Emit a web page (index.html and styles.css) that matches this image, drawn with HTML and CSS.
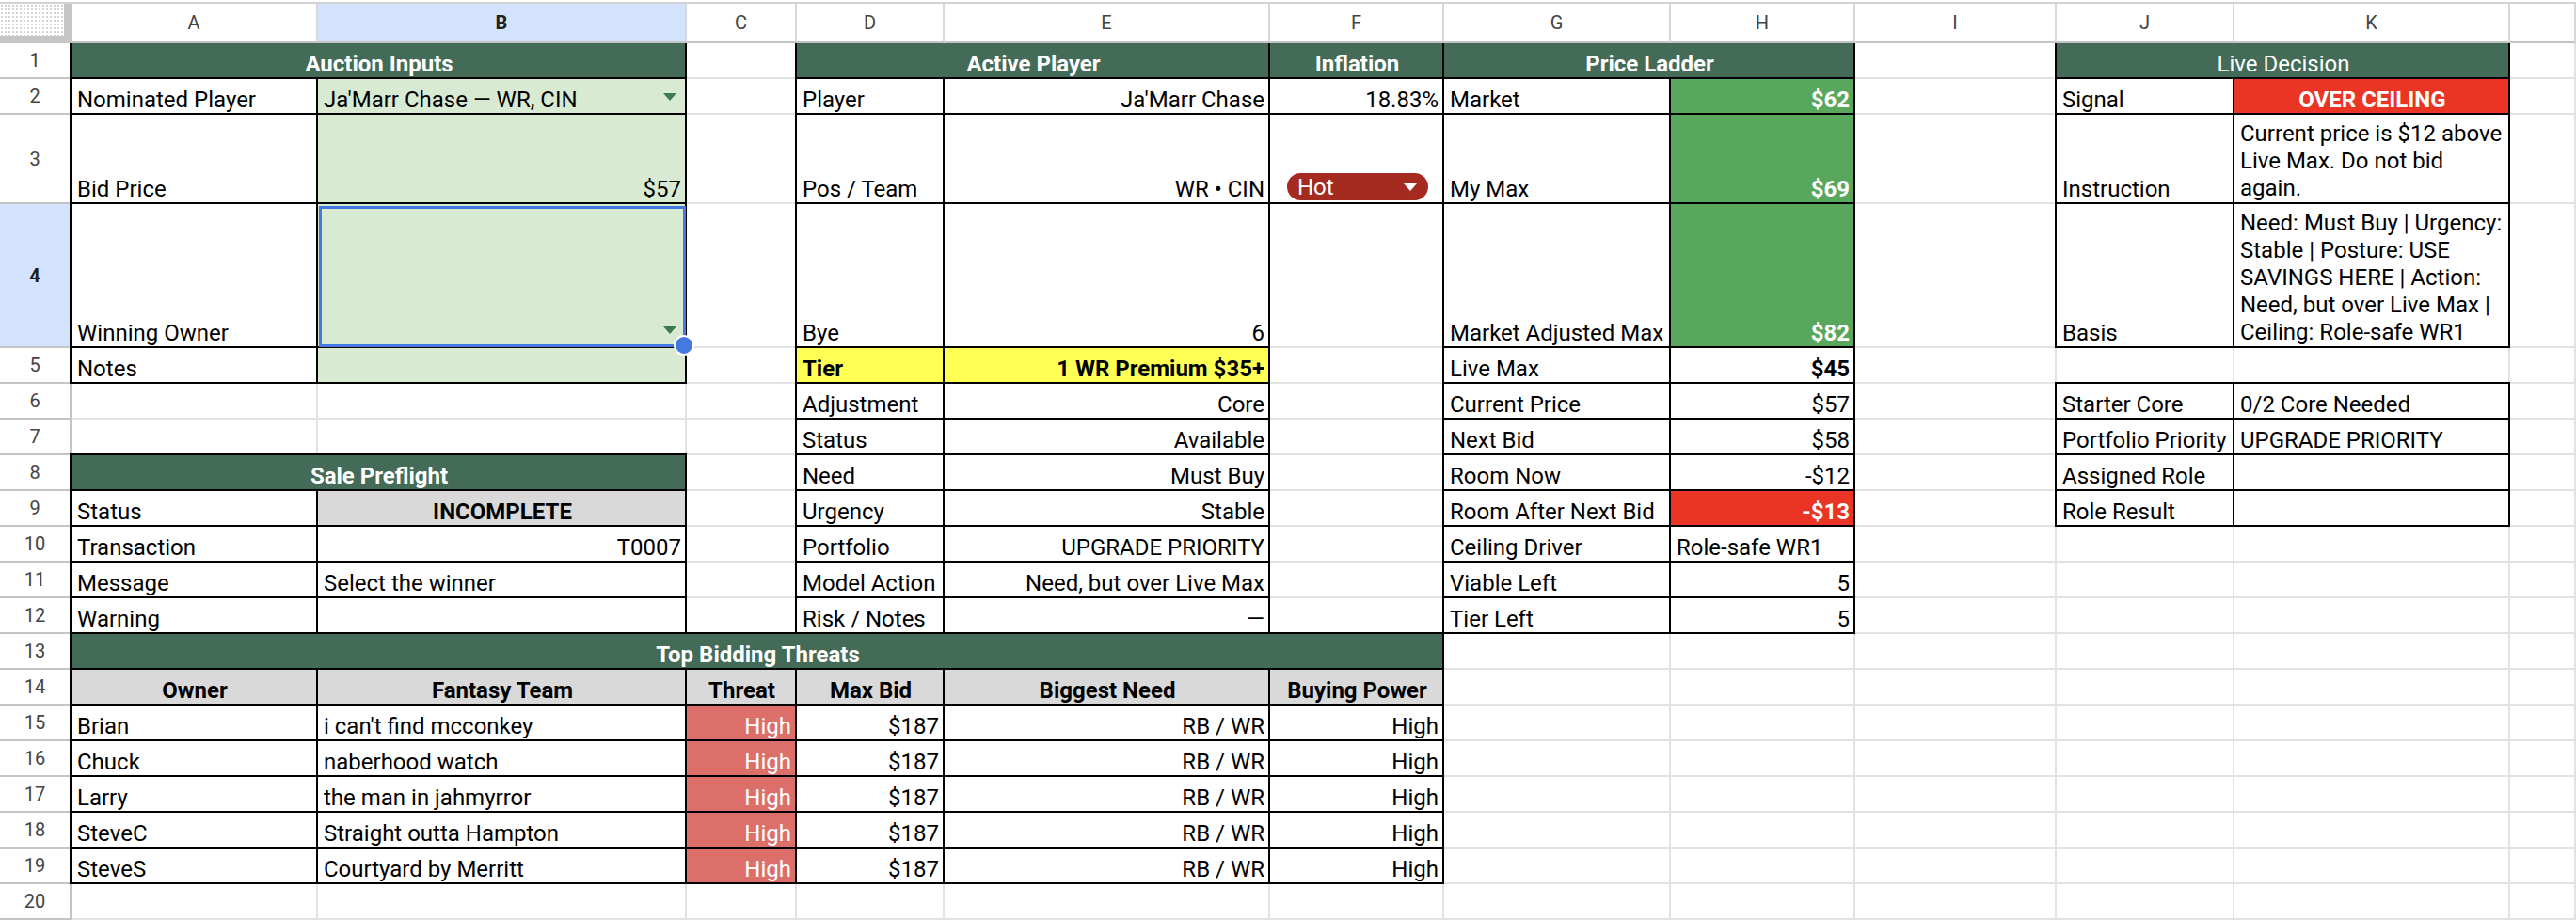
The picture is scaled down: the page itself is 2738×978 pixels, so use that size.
FILE: index.html
```html
<!DOCTYPE html>
<html>
<head>
<meta charset="utf-8">
<title>Auction Board</title>
<link rel="stylesheet" href="styles.css">
</head>
<body>
<div class="sheet">
  <!-- column headers -->
  <div class="corner"></div>
  <div class="ch">A</div><div class="ch hl">B</div><div class="ch">C</div><div class="ch">D</div><div class="ch">E</div><div class="ch">F</div><div class="ch">G</div><div class="ch">H</div><div class="ch">I</div><div class="ch">J</div><div class="ch">K</div><div class="ch"></div>

  <!-- row 1 -->
  <div class="rh">1</div>
  <div class="c b nt g span2">Auction Inputs</div>
  <div class="c"></div>
  <div class="c b nt g span2">Active Player</div>
  <div class="c b nt g">Inflation</div>
  <div class="c b nt g span2">Price Ladder</div>
  <div class="c"></div>
  <div class="c b nt g n span2">Live Decision</div>
  <div class="c"></div>

  <!-- row 2 -->
  <div class="rh">2</div>
  <div class="c b">Nominated Player</div>
  <div class="c b inp">Ja'Marr Chase — WR, CIN<span class="dd"></span></div>
  <div class="c"></div>
  <div class="c b">Player</div>
  <div class="c b r">Ja'Marr Chase</div>
  <div class="c b r">18.83%</div>
  <div class="c b">Market</div>
  <div class="c b r gr">$62</div>
  <div class="c"></div>
  <div class="c b">Signal</div>
  <div class="c b ctr red">OVER CEILING</div>
  <div class="c"></div>

  <!-- row 3 -->
  <div class="rh">3</div>
  <div class="c b">Bid Price</div>
  <div class="c b inp r">$57</div>
  <div class="c"></div>
  <div class="c b">Pos / Team</div>
  <div class="c b r">WR • CIN</div>
  <div class="c b"><span class="chip"><span class="t">Hot</span><span class="a"></span></span></div>
  <div class="c b">My Max</div>
  <div class="c b r gr">$69</div>
  <div class="c"></div>
  <div class="c b">Instruction</div>
  <div class="c b"><span class="wr">Current price is $12 above<br>Live Max. Do not bid<br>again.</span></div>
  <div class="c"></div>

  <!-- row 4 -->
  <div class="rh hl">4</div>
  <div class="c b">Winning Owner</div>
  <div class="c b inp sel"><span class="dd"></span></div>
  <div class="c"></div>
  <div class="c b">Bye</div>
  <div class="c b r">6</div>
  <div class="c"></div>
  <div class="c b">Market Adjusted Max</div>
  <div class="c b r gr">$82</div>
  <div class="c"></div>
  <div class="c b">Basis</div>
  <div class="c b"><span class="wr">Need: Must Buy | Urgency:<br>Stable | Posture: USE<br>SAVINGS HERE | Action:<br>Need, but over Live Max |<br>Ceiling: Role-safe WR1</span></div>
  <div class="c"></div>

  <!-- row 5 -->
  <div class="rh">5</div>
  <div class="c b">Notes</div>
  <div class="c b inp"></div>
  <div class="c"></div>
  <div class="c b yl">Tier</div>
  <div class="c b yl r">1 WR Premium $35+</div>
  <div class="c"></div>
  <div class="c b">Live Max</div>
  <div class="c b r bold">$45</div>
  <div class="c"></div>
  <div class="c"></div>
  <div class="c"></div>
  <div class="c"></div>

  <!-- row 6 -->
  <div class="rh">6</div>
  <div class="c"></div>
  <div class="c"></div>
  <div class="c"></div>
  <div class="c b">Adjustment</div>
  <div class="c b r">Core</div>
  <div class="c"></div>
  <div class="c b">Current Price</div>
  <div class="c b r">$57</div>
  <div class="c"></div>
  <div class="c b">Starter Core</div>
  <div class="c b">0/2 Core Needed</div>
  <div class="c"></div>

  <!-- row 7 -->
  <div class="rh">7</div>
  <div class="c"></div>
  <div class="c"></div>
  <div class="c"></div>
  <div class="c b">Status</div>
  <div class="c b r">Available</div>
  <div class="c"></div>
  <div class="c b">Next Bid</div>
  <div class="c b r">$58</div>
  <div class="c"></div>
  <div class="c b">Portfolio Priority</div>
  <div class="c b">UPGRADE PRIORITY</div>
  <div class="c"></div>

  <!-- row 8 -->
  <div class="rh">8</div>
  <div class="c b g span2">Sale Preflight</div>
  <div class="c"></div>
  <div class="c b">Need</div>
  <div class="c b r">Must Buy</div>
  <div class="c"></div>
  <div class="c b">Room Now</div>
  <div class="c b r">-$12</div>
  <div class="c"></div>
  <div class="c b">Assigned Role</div>
  <div class="c b"></div>
  <div class="c"></div>

  <!-- row 9 -->
  <div class="rh">9</div>
  <div class="c b">Status</div>
  <div class="c b gy ctr bold">INCOMPLETE</div>
  <div class="c"></div>
  <div class="c b">Urgency</div>
  <div class="c b r">Stable</div>
  <div class="c"></div>
  <div class="c b">Room After Next Bid</div>
  <div class="c b r red">-$13</div>
  <div class="c"></div>
  <div class="c b">Role Result</div>
  <div class="c b"></div>
  <div class="c"></div>

  <!-- row 10 -->
  <div class="rh">10</div>
  <div class="c b">Transaction</div>
  <div class="c b r">T0007</div>
  <div class="c"></div>
  <div class="c b">Portfolio</div>
  <div class="c b r">UPGRADE PRIORITY</div>
  <div class="c"></div>
  <div class="c b">Ceiling Driver</div>
  <div class="c b">Role-safe WR1</div>
  <div class="c"></div>
  <div class="c"></div>
  <div class="c"></div>
  <div class="c"></div>

  <!-- row 11 -->
  <div class="rh">11</div>
  <div class="c b">Message</div>
  <div class="c b">Select the winner</div>
  <div class="c"></div>
  <div class="c b">Model Action</div>
  <div class="c b r">Need, but over Live Max</div>
  <div class="c"></div>
  <div class="c b">Viable Left</div>
  <div class="c b r">5</div>
  <div class="c"></div>
  <div class="c"></div>
  <div class="c"></div>
  <div class="c"></div>

  <!-- row 12 -->
  <div class="rh">12</div>
  <div class="c b">Warning</div>
  <div class="c b"></div>
  <div class="c"></div>
  <div class="c b">Risk / Notes</div>
  <div class="c b r">—</div>
  <div class="c"></div>
  <div class="c b">Tier Left</div>
  <div class="c b r">5</div>
  <div class="c"></div>
  <div class="c"></div>
  <div class="c"></div>
  <div class="c"></div>

  <!-- row 13 -->
  <div class="rh">13</div>
  <div class="c b g span6">Top Bidding Threats</div>
  <div class="c"></div>
  <div class="c"></div>
  <div class="c"></div>
  <div class="c"></div>
  <div class="c"></div>
  <div class="c"></div>

  <!-- row 14 -->
  <div class="rh">14</div>
  <div class="c b gy ctr bold">Owner</div>
  <div class="c b gy ctr bold">Fantasy Team</div>
  <div class="c b gy ctr bold">Threat</div>
  <div class="c b gy ctr bold">Max Bid</div>
  <div class="c b gy ctr bold">Biggest Need</div>
  <div class="c b gy ctr bold">Buying Power</div>
  <div class="c"></div>
  <div class="c"></div>
  <div class="c"></div>
  <div class="c"></div>
  <div class="c"></div>
  <div class="c"></div>

  <!-- row 15 -->
  <div class="rh">15</div>
  <div class="c b">Brian</div>
  <div class="c b">i can't find mcconkey</div>
  <div class="c b r hi">High</div>
  <div class="c b r">$187</div>
  <div class="c b r">RB / WR</div>
  <div class="c b r">High</div>
  <div class="c"></div>
  <div class="c"></div>
  <div class="c"></div>
  <div class="c"></div>
  <div class="c"></div>
  <div class="c"></div>

  <!-- row 16 -->
  <div class="rh">16</div>
  <div class="c b">Chuck</div>
  <div class="c b">naberhood watch</div>
  <div class="c b r hi">High</div>
  <div class="c b r">$187</div>
  <div class="c b r">RB / WR</div>
  <div class="c b r">High</div>
  <div class="c"></div>
  <div class="c"></div>
  <div class="c"></div>
  <div class="c"></div>
  <div class="c"></div>
  <div class="c"></div>

  <!-- row 17 -->
  <div class="rh">17</div>
  <div class="c b">Larry</div>
  <div class="c b">the man in jahmyrror</div>
  <div class="c b r hi">High</div>
  <div class="c b r">$187</div>
  <div class="c b r">RB / WR</div>
  <div class="c b r">High</div>
  <div class="c"></div>
  <div class="c"></div>
  <div class="c"></div>
  <div class="c"></div>
  <div class="c"></div>
  <div class="c"></div>

  <!-- row 18 -->
  <div class="rh">18</div>
  <div class="c b">SteveC</div>
  <div class="c b">Straight outta Hampton</div>
  <div class="c b r hi">High</div>
  <div class="c b r">$187</div>
  <div class="c b r">RB / WR</div>
  <div class="c b r">High</div>
  <div class="c"></div>
  <div class="c"></div>
  <div class="c"></div>
  <div class="c"></div>
  <div class="c"></div>
  <div class="c"></div>

  <!-- row 19 -->
  <div class="rh">19</div>
  <div class="c b">SteveS</div>
  <div class="c b">Courtyard by Merritt</div>
  <div class="c b r hi">High</div>
  <div class="c b r">$187</div>
  <div class="c b r">RB / WR</div>
  <div class="c b r">High</div>
  <div class="c"></div>
  <div class="c"></div>
  <div class="c"></div>
  <div class="c"></div>
  <div class="c"></div>
  <div class="c"></div>

  <!-- row 20 -->
  <div class="rh">20</div>
  <div class="c"></div>
  <div class="c"></div>
  <div class="c"></div>
  <div class="c"></div>
  <div class="c"></div>
  <div class="c"></div>
  <div class="c"></div>
  <div class="c"></div>
  <div class="c"></div>
  <div class="c"></div>
  <div class="c"></div>
  <div class="c"></div>
</div>
</body>
</html>
```
FILE: styles.css
```css
* { box-sizing: border-box; }
html, body { margin: 0; padding: 0; background: #fff; }
body {
  font-family: Roboto, "Liberation Sans", Arial, sans-serif;
  font-size: 24px;
  color: #000;
  overflow: hidden;
}
.sheet {
  margin-top: 2px;
  border-top: 2px solid #d3d3d3;
  display: grid;
  grid-template-columns: 76px 262px 392px 117px 157px 346px 185px 241px 196px 214px 189px 293px 1fr;
  grid-template-rows: 42px 38px 38px 95px 153px repeat(16, 38px);
}
.corner {
  background: radial-gradient(circle, #d4d4d4 0.8px, transparent 1.3px) 0 0 / 4px 4px, #fff;
  border-right: 8px solid #c6c6c6;
  border-bottom: 8px solid #c6c6c6;
}
.ch {
  display: flex;
  align-items: center;
  justify-content: center;
  font-size: 20px;
  color: #444;
  border-right: 2px solid #d8d8d8;
  border-bottom: 2px solid #c4c4c4;
}
.rh {
  display: flex;
  align-items: center;
  justify-content: center;
  font-size: 20px;
  color: #444;
  border-right: 2px solid #c4c4c4;
  border-bottom: 2px solid #c4c4c4;
}
.hl { background: #d3e3fd; font-weight: 700; color: #1f1f1f; }

.c {
  display: flex;
  align-items: flex-end;
  min-width: 0;
  padding: 0 4px 0 6px;
  line-height: 28px;
  white-space: nowrap;
  overflow: hidden;
  border-right: 2px solid #e2e2e2;
  border-bottom: 2px solid #e2e2e2;
}
.wr { line-height: 29px; }
.span2 { grid-column: span 2; }
.span6 { grid-column: span 6; }
.b {
  border: 2px solid #000;
  margin: -2px 0 0 -2px;
}
.nt { border-top: 0; margin-top: 0; }
.g { background: #436b57; color: #fff; font-weight: 700; justify-content: center; }
.g.n { font-weight: 400; }
.r { justify-content: flex-end; }
.ctr { justify-content: center; }
.bold { font-weight: 700; }
.inp { background: #d9ead3; }
.gr { background: #58a75c; color: #fff; font-weight: 700; }
.red { background: #ea3424; color: #fff; font-weight: 700; }
.hi { background: #dc6f6a; color: #fff; }
.gy { background: #d9d9d9; }
.yl { background: #ffff54; font-weight: 700; }

.dd {
  margin-left: auto;
  margin-right: 5px;
  margin-bottom: 13px;
  width: 0;
  height: 0;
  border-left: 7px solid transparent;
  border-right: 7px solid transparent;
  border-top: 8px solid #3d7a4f;
}

.chip {
  display: flex;
  align-items: center;
  width: 150px;
  height: 29px;
  margin: 0 0 2px 12px;
  padding: 0 12px 0 11px;
  border-radius: 15px;
  background: #a52a1f;
  color: #fff;
  line-height: 1;
}
.chip .t { flex: 1; }
.chip .a {
  width: 0;
  height: 0;
  border-left: 7px solid transparent;
  border-right: 7px solid transparent;
  border-top: 8px solid #fff;
}

.sel { position: relative; overflow: visible; z-index: 2; }
.sel::after {
  content: "";
  position: absolute;
  left: 1px;
  top: 2px;
  right: -1px;
  bottom: -1px;
  border: 3px solid #4479e1;
}
.sel::before {
  content: "";
  position: absolute;
  right: -10px;
  bottom: -10px;
  width: 18px;
  height: 18px;
  border-radius: 50%;
  background: #4479e1;
  border: 2px solid #fff;
  z-index: 1;
}
```
